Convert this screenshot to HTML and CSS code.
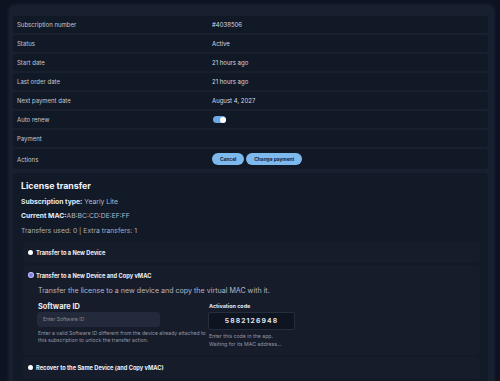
FILE: index.html
```html
<!DOCTYPE html>
<html lang="en">
<head>
  <meta charset="UTF-8" />
  <meta name="viewport" content="width=device-width, initial-scale=1.0" />
  <title>Subscription</title>
  <link rel="stylesheet" href="styles.css">
</head>
<body>
  <div class="panel">
    <div class="rows">
      <div class="row"><span class="label">Subscription number</span><span class="value">#4038506</span></div>
      <div class="row"><span class="label">Status</span><span class="value">Active</span></div>
      <div class="row"><span class="label">Start date</span><span class="value">21 hours ago</span></div>
      <div class="row"><span class="label">Last order date</span><span class="value">21 hours ago</span></div>
      <div class="row"><span class="label">Next payment date</span><span class="value">August 4, 2027</span></div>
      <div class="row"><span class="label">Auto renew</span><span class="value"><span class="toggle"><span class="knob"></span></span></span></div>
      <div class="row"><span class="label">Payment</span><span class="value"></span></div>
      <div class="row actions"><span class="label">Actions</span>
        <span class="value">
          <button class="pill">Cancel</button>
          <button class="pill">Change payment</button>
        </span>
      </div>
    </div>

    <div class="license">
      <h3>License transfer</h3>
      <p class="meta"><strong>Subscription type:</strong> Yearly Lite</p>
      <p class="meta"><strong>Current MAC:</strong>AB:BC:CD:DE:EF:FF</p>
      <p class="meta muted">Transfers used: 0 | Extra transfers: 1</p>

      <div class="options">
        <div class="option">
          <div class="option-head"><span class="dot"></span>Transfer to a New Device</div>
        </div>

        <div class="option open">
          <div class="option-head"><span class="dot selected"></span>Transfer to a New Device and Copy vMAC</div>
          <div class="option-body">
            <p class="desc">Transfer the license to a new device and copy the virtual MAC with it.</p>
            <div class="fields">
              <div class="field-left">
                <div class="field-title">Software ID</div>
                <input type="text" class="sw-input" placeholder="Enter Software ID" />
                <p class="hint">Enter a valid Software ID different from the device already attached to this subscription to unlock the transfer action.</p>
              </div>
              <div class="field-right">
                <div class="code-label">Activation code</div>
                <div class="code-box">5882126948</div>
                <p class="hint code-hint">Enter this code in the app.<br>Waiting for its MAC address...</p>
              </div>
            </div>
          </div>
        </div>

        <div class="option">
          <div class="option-head"><span class="dot"></span>Recover to the Same Device (and Copy vMAC)</div>
        </div>
      </div>
    </div>
  </div>
</body>
</html>
```

FILE: styles.css
```css
body {
  margin: 0;
  background-color: #0d1320;
  font-family: Inter, 'Noto Sans', sans-serif;
  color: #d6dae2;
  height: 381px;
  overflow: hidden;
}

.panel {
  margin: 5px 6px 0 9px;
  padding: 11px 6px 0 4px;
  background-color: #18202f;
  border-radius: 6px 6px 0 0;
  box-shadow: 0 0 4px rgba(40, 60, 90, 0.5);
  height: 400px;
}

.rows {
  display: flex;
  flex-direction: column;
  gap: 2px;
}

.row {
  display: grid;
  grid-template-columns: 195px 1fr;
  align-items: center;
  height: 17px;
  padding-left: 4px;
  background-color: #111826;
  border-radius: 3px;
  font-size: 6px;
}

.row.actions {
  height: 20px;
}

.label {
  color: #c4c9d2;
}

.value {
  color: #d8dce3;
  display: flex;
  align-items: center;
  gap: 2px;
}

.toggle {
  display: inline-flex;
  justify-content: flex-end;
  align-items: center;
  width: 13px;
  height: 7px;
  margin-left: 1px;
  background-color: #6aa8e6;
  border-radius: 4px;
}

.knob {
  width: 6px;
  height: 6px;
  background-color: #ffffff;
  border-radius: 50%;
  margin-right: 0.5px;
}

.pill {
  height: 12px;
  padding: 0 8px;
  border: none;
  border-radius: 6px;
  background-color: #7db9ec;
  color: #13203a;
  font-family: inherit;
  font-size: 4.8px;
  font-weight: 700;
}

.license {
  margin-top: 4px;
  padding: 7px 8px 0 8px;
  background-color: #121927;
  border-radius: 4px;
  height: 230px;
}

.license h3 {
  margin: 0;
  font-size: 8.8px;
  line-height: 11px;
  font-weight: 700;
  color: #f2f4f7;
}

.meta {
  margin: 6px 0 0;
  font-size: 6.8px;
  line-height: 10px;
  color: #b7bcc6;
}

.meta + .meta {
  margin-top: 4px;
}

.meta.muted {
  margin-top: 4.5px;
  color: #a9aeb8;
}

.meta strong {
  color: #e8ebf0;
}

.options {
  margin: 6px 0 0 2px;
  display: flex;
  flex-direction: column;
  gap: 2px;
}

.option {
  background-color: #171c2b;
  border-radius: 4px;
}

.option-head {
  display: flex;
  align-items: center;
  gap: 3px;
  height: 21px;
  padding-left: 5px;
  font-size: 5.7px;
  font-weight: 700;
  color: #eef0f4;
}

.dot {
  width: 5px;
  height: 5px;
  border-radius: 50%;
  background-color: #ffffff;
}

.dot.selected {
  background-color: #7b7ff0;
  box-shadow: 0 0 0 1px #c9cbf7;
  width: 4px;
  height: 4px;
  margin: 0 0.5px;
}

.option-body {
  padding: 0 0 7px 15px;
}

.desc {
  margin: 0;
  font-size: 7.1px;
  line-height: 10px;
  color: #b3b8c3;
}

.fields {
  display: grid;
  grid-template-columns: 172px 1fr;
  margin-top: 6px;
}

.field-right {
  margin-left: -1px;
}

.field-title {
  font-size: 7.4px;
  line-height: 10px;
  font-weight: 700;
  color: #e9ecf1;
}

.sw-input {
  display: block;
  box-sizing: border-box;
  width: 123px;
  height: 15px;
  margin: 0 0 0 -1px;
  padding: 0 6px;
  border: none;
  border-radius: 4px;
  background-color: #232a3b;
  color: #d6dae2;
  font-family: inherit;
  font-size: 5px;
}

.sw-input::placeholder {
  color: #868c99;
}

.hint {
  max-width: 172px;
  margin: 3.5px 0 0;
  font-size: 5.1px;
  line-height: 7px;
  color: #9297a3;
}

.code-label {
  font-size: 5.4px;
  line-height: 9px;
  font-weight: 700;
  color: #e6e9ee;
}

.code-box {
  box-sizing: border-box;
  width: 87px;
  height: 18px;
  margin: 1px 0 0 -1px;
  border: 1px solid #262d3d;
  background-color: #0f1421;
  border-radius: 2px;
  display: flex;
  align-items: center;
  justify-content: center;
  font-size: 6.8px;
  font-weight: 700;
  letter-spacing: 1.1px;
  color: #dfe3ea;
}

.code-hint {
  margin-top: 2px;
  font-size: 5.2px;
  line-height: 8px;
}
```
